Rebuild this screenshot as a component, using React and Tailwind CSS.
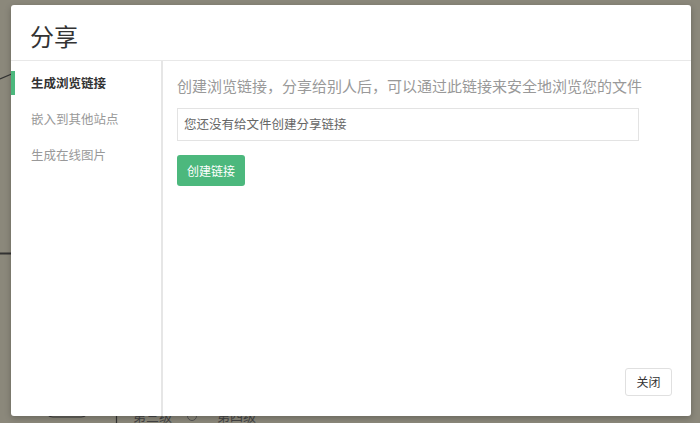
import React from 'react';

const tabs = ['生成浏览链接', '嵌入到其他站点', '生成在线图片'];

const App = () => {
  return (
    <div className="relative h-[423px] w-[700px] overflow-hidden bg-[#8b887b] font-['Noto_Sans_CJK_SC',sans-serif]">
      {/* mind map behind the dialog */}
      <svg className="absolute left-0 top-0" width="700" height="423">
        <line x1="0" y1="79" x2="14" y2="73" stroke="#333" strokeWidth="1.2" />
        <line x1="0" y1="253.5" x2="14" y2="253.5" stroke="#333" strokeWidth="2" />
        <rect x="45" y="395" width="44" height="22" rx="8" fill="none" stroke="#3a3a3a" strokeWidth="1.2" />
        <line x1="116.5" y1="408" x2="116.5" y2="423" stroke="#333" strokeWidth="1.2" />
        <circle cx="192" cy="416" r="4.5" fill="none" stroke="#555" strokeWidth="1" />
      </svg>
      <div className="absolute left-[133px] top-[408px] text-[13px] leading-[16px] text-[#444]">第三级</div>
      <div className="absolute left-[217px] top-[408px] text-[13px] leading-[16px] text-[#444]">第四级</div>

      {/* dialog */}
      <div className="absolute left-[11px] top-[5px] flex h-[411px] w-[680px] flex-col rounded-[3px] bg-white shadow-[0_2px_6px_rgba(0,0,0,0.25)]">
        <div className="flex h-[56px] shrink-0 items-center border-b border-[#e8e8e8] pl-[19px]">
          <h2 className="pt-[6px] text-[24px] font-normal leading-none text-[#333]">分享</h2>
        </div>
        <div className="flex flex-1">
          <div className="w-[152px] shrink-0 border-r-2 border-[#e6e6e6] pt-[10px]">
            {tabs.map((t, i) => (
              <div
                key={t}
                className={`mb-[12px] flex h-[24px] items-center border-l-4 pl-[16px] text-[12.5px] ${
                  i === 0 ? 'border-[#4cb87d] font-bold text-[#333]' : 'border-transparent text-[#999]'
                }`}
              >
                {t}
              </div>
            ))}
          </div>
          <div className="relative flex-1 pl-[14px] pt-[14px]">
            <p className="text-[15px] leading-[22px] text-[#999]">
              创建浏览链接，分享给别人后，可以通过此链接来安全地浏览您的文件
            </p>
            <div className="mt-[11px] flex h-[33px] w-[462px] items-center border border-[#e3e3e3] px-[6px] text-[12.5px] text-[#666]">
              您还没有给文件创建分享链接
            </div>
            <button className="mt-[14px] h-[31px] w-[68px] rounded-[3px] bg-[#4cb87d] text-[12px] text-white">
              创建链接
            </button>
            <button className="absolute bottom-[20px] right-[19px] h-[28px] w-[47px] rounded-[3px] border border-[#e0e0e0] bg-white text-[12px] text-[#333]">
              关闭
            </button>
          </div>
        </div>
      </div>
    </div>
  );
};

export default App;
